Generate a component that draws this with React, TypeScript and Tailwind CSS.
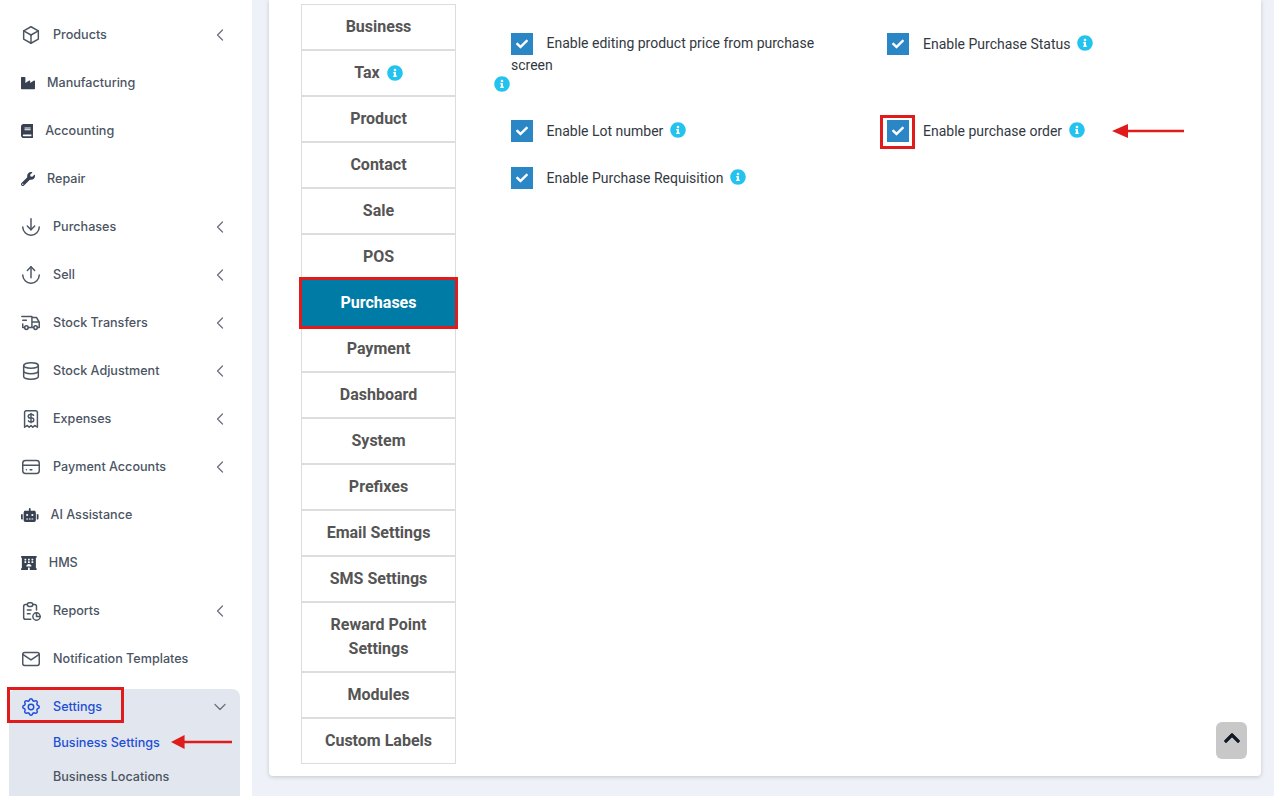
import React from 'react';
import { FaBook, FaCheck, FaChevronUp, FaHotel, FaIndustry, FaInfoCircle, FaRobot, FaWrench } from 'react-icons/fa';
import {
  TbArrowDownFromArc,
  TbArrowDownToArc,
  TbBox,
  TbChevronDown,
  TbChevronLeft,
  TbCreditCard,
  TbDatabase,
  TbMail,
  TbReceiptDollar,
  TbReport,
  TbSettings,
  TbTruckDelivery,
} from 'react-icons/tb';

const outline = '-mx-px h-[22px] w-[22px] shrink-0 stroke-[1.6] text-[#4b5563]';
const solid = 'h-3.5 shrink-0 text-[#374151]';

const menu = [
  { label: 'Products', icon: <TbBox className={outline} />, sub: true },
  { label: 'Manufacturing', icon: <FaIndustry className={`${solid} w-3.5`} /> },
  { label: 'Accounting', icon: <FaBook className={`${solid} w-[12.25px]`} /> },
  { label: 'Repair', icon: <FaWrench className={`${solid} w-3.5`} /> },
  { label: 'Purchases', icon: <TbArrowDownToArc className={outline} />, sub: true },
  { label: 'Sell', icon: <TbArrowDownFromArc className={outline} />, sub: true },
  { label: 'Stock Transfers', icon: <TbTruckDelivery className={outline} />, sub: true },
  { label: 'Stock Adjustment', icon: <TbDatabase className={outline} />, sub: true },
  { label: 'Expenses', icon: <TbReceiptDollar className={outline} />, sub: true },
  { label: 'Payment Accounts', icon: <TbCreditCard className={outline} />, sub: true },
  { label: 'AI Assistance', icon: <FaRobot className={`${solid} w-[17.5px]`} /> },
  { label: 'HMS', icon: <FaHotel className={`${solid} w-[15.75px]`} /> },
  { label: 'Reports', icon: <TbReport className={outline} />, sub: true },
  { label: 'Notification Templates', icon: <TbMail className={outline} /> },
];

const tabs = ['Business', 'Tax', 'Product', 'Contact', 'Sale', 'POS', 'Purchases', 'Payment', 'Dashboard', 'System', 'Prefixes', 'Email Settings', 'SMS Settings', 'Reward Point Settings', 'Modules', 'Custom Labels'];

// Red arrow used by the annotations on the screenshot
const RedArrow = ({ className }: { className: string }) => (
  <svg viewBox="0 0 72 14" preserveAspectRatio="none" className={className}>
    <path d="M14 7H72" stroke="#e01b1b" strokeWidth="2.5" />
    <path d="M0 7L16 0V14Z" fill="#e01b1b" />
  </svg>
);

const Check = () => (
  <span className="inline-flex h-[22px] w-[22px] shrink-0 items-center justify-center bg-[#2a86c5] align-top text-white">
    <FaCheck className="h-3 w-3" />
  </span>
);

const Info = ({ className = '' }: { className?: string }) => (
  <FaInfoCircle className={`h-4 w-4 text-[#22c3ee] ${className}`} />
);

const Option = ({ label, left }: { label: string; left?: boolean }) => (
  <div className="flex items-center text-[14px] leading-[22px] text-[#33383f]">
    <Check />
    <span className={left ? 'ml-[13.5px]' : 'ml-[14px]'}>{label}</span>
    <Info className="ml-[7px] -translate-y-px" />
  </div>
);

export default function App() {
  return (
    <div className="flex h-screen overflow-hidden bg-[#eef1f7] font-['Roboto',sans-serif]">
      {/* Sidebar */}
      <aside className="flex w-[252px] shrink-0 flex-col bg-white pt-[11px] font-['Inter',sans-serif] text-[12.6px] font-medium text-[#4b5563]">
        {menu.map((item) => (
          <div key={item.label} className="flex h-12 shrink-0 items-center gap-3 pl-[21px] pr-[22px]">
            {item.icon}
            <span className="flex-1">{item.label}</span>
            {item.sub && <TbChevronLeft className="h-5 w-5 stroke-[1.5] text-[#6b7280]" />}
          </div>
        ))}
        <div className="ml-[9px] mt-[6px] w-[231px] flex-1 rounded-t-lg bg-[#e2e6ee]">
          <div className="relative flex h-[36px] items-center gap-3 pl-3 pr-[10px] text-[#1d4ed8]">
            <TbSettings className="-mx-px h-[22px] w-[22px] stroke-[1.6]" />
            <span className="flex-1">Settings</span>
            <TbChevronDown className="h-5 w-5 stroke-[1.5] text-[#6b7280]" />
            <div className="absolute left-[-2px] top-[-2px] h-[36px] w-[117px] border-[3px] border-[#e01b1b]" />
          </div>
          <div className="relative mt-[1px] flex h-[34px] items-center pl-11 text-[#1d4ed8]">
            Business Settings
            <RedArrow className="absolute left-[162px] top-[9px] h-[14px] w-[61px]" />
          </div>
          <div className="flex h-[34px] items-center pl-11">Business Locations</div>
        </div>
      </aside>

      {/* Main */}
      <main className="relative flex flex-1 flex-col pb-5 pl-[17px] pr-[13px]">
        <div className="flex flex-1 rounded-b bg-white pl-8 pt-1 shadow-[0_1px_4px_rgba(0,0,0,0.18)]">
          <div className="w-[155px] shrink-0">
            {tabs.map((tab) => (
              <div
                key={tab}
                className={
                  tab === 'Purchases'
                    ? 'relative flex h-[46px] items-center justify-center bg-[#007ba5] text-[16px] font-bold text-white'
                    : 'flex min-h-[46px] items-center justify-center border border-[#dddddd] px-5 py-[10px] text-center text-[16px] font-bold leading-6 text-[#555555]'
                }
              >
                <span>
                  {tab}
                  {tab === 'Tax' && <Info className="mb-[2px] ml-[7px] inline-block" />}
                </span>
                {tab === 'Purchases' && (
                  <div className="absolute inset-x-[-2px] inset-y-[-3px] border-[3px] border-[#e01b1b]" />
                )}
              </div>
            ))}
          </div>

          <div className="ml-[55px] grid h-fit flex-1 grid-cols-[376px_1fr] grid-rows-[87px_47px_auto] items-start pt-[29px]">
            <div className="w-[340px] text-[14px] leading-[21px] text-[#33383f]">
              <Check />
              <span className="ml-[13.5px]">Enable editing product price from purchase screen</span>
              <Info className="ml-[-17px] mt-[0px]" />
            </div>
            <Option label="Enable Purchase Status" />
            <Option label="Enable Lot number" left />
            <div className="relative">
              <Option label="Enable purchase order" />
              <div className="absolute left-[-7px] top-[-5px] h-[34px] w-[35px] border-[3px] border-[#e01b1b]" />
              <RedArrow className="absolute left-[225px] top-[4px] h-[14px] w-[72px]" />
            </div>
            <Option label="Enable Purchase Requisition" left />
          </div>
        </div>

        <div className="absolute left-[964px] top-[722px] flex h-[37px] w-[31px] items-center justify-center rounded-md bg-[#c8c8c8] text-[#111827]">
          <FaChevronUp className="h-[18px] w-[18px] -translate-y-[3px] stroke-current stroke-[20]" />
        </div>
      </main>
    </div>
  );
}
